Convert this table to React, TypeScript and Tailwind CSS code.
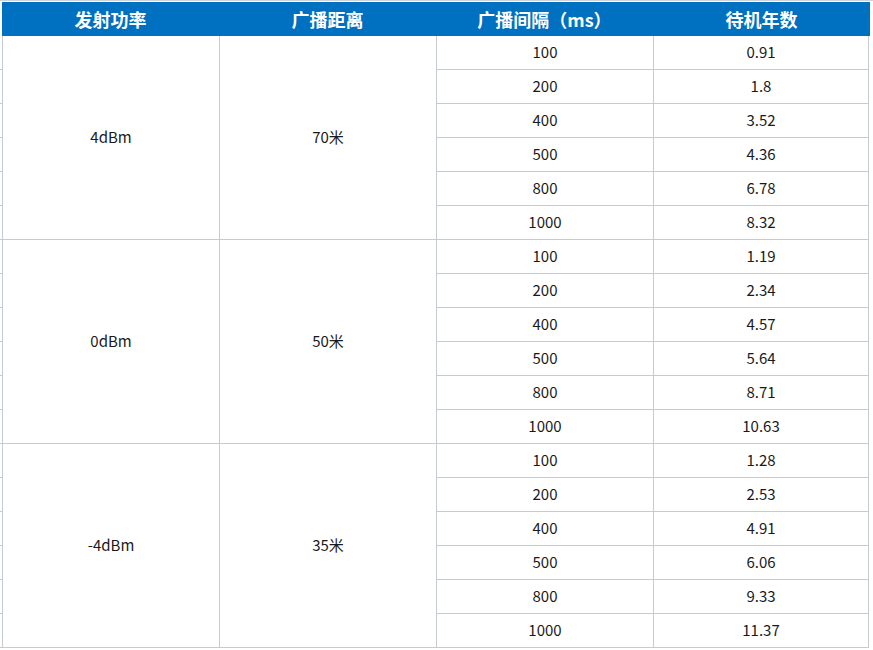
import React from "react";

const groups = [
  { power: "4dBm", dist: "70米", rows: [["100", "0.91"], ["200", "1.8"], ["400", "3.52"], ["500", "4.36"], ["800", "6.78"], ["1000", "8.32"]] },
  { power: "0dBm", dist: "50米", rows: [["100", "1.19"], ["200", "2.34"], ["400", "4.57"], ["500", "5.64"], ["800", "8.71"], ["1000", "10.63"]] },
  { power: "-4dBm", dist: "35米", rows: [["100", "1.28"], ["200", "2.53"], ["400", "4.91"], ["500", "6.06"], ["800", "9.33"], ["1000", "11.37"]] },
];

const font = { fontFamily: '"Noto Sans CJK SC", "Noto Sans", sans-serif' };

export default function App() {
  return (
    <div className="w-[873px] h-[650px] bg-white overflow-hidden border-t border-[#d0d4da]" style={font}>
      <div className="flex pt-px">
        <div className="flex flex-col w-[2px]">
          <div className="h-[34px]" />
          {Array.from({ length: 18 }).map((_, i) => (
            <div key={i} className="h-[34px] border-b border-[#c6cad2]" />
          ))}
        </div>
        <div className="flex flex-col">
          <div className="grid grid-cols-[217px_217px_217px_217px] h-[34px] bg-[#0070c0] text-white font-bold text-[18px] items-center text-center">
            <div>发射功率</div>
            <div>广播距离</div>
            <div>广播间隔（ms）</div>
            <div>待机年数</div>
          </div>
          <div className="grid grid-cols-[217px_217px_217px_215px] auto-rows-[34px] border-l border-[#c6cad2] text-[15px] text-[#1a1a1a]">
            {groups.map((g, gi) => (
              <React.Fragment key={gi}>
                <div className="border-r border-b border-[#c6cad2] flex items-center justify-center" style={{ gridColumn: 1, gridRow: `${gi * 6 + 1} / span 6` }}>
                  {g.power}
                </div>
                <div className="border-r border-b border-[#c6cad2] flex items-center justify-center" style={{ gridColumn: 2, gridRow: `${gi * 6 + 1} / span 6` }}>
                  {g.dist}
                </div>
                {g.rows.map((r, ri) => (
                  <React.Fragment key={ri}>
                    <div className="border-r border-b border-[#c6cad2] flex items-center justify-center" style={{ gridColumn: 3, gridRow: gi * 6 + ri + 1 }}>
                      {r[0]}
                    </div>
                    <div className="border-r border-b border-[#c6cad2] flex items-center justify-center" style={{ gridColumn: 4, gridRow: gi * 6 + ri + 1 }}>
                      {r[1]}
                    </div>
                  </React.Fragment>
                ))}
              </React.Fragment>
            ))}
          </div>
        </div>
      </div>
    </div>
  );
}
